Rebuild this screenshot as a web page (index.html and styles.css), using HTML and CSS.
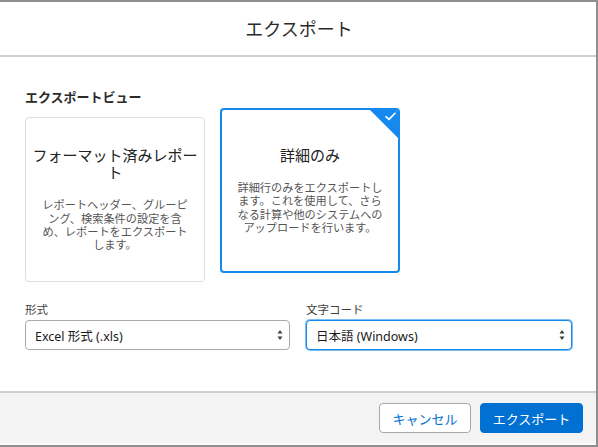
FILE: index.html
```html
<!DOCTYPE html>
<html lang="ja">
<head>
<meta charset="utf-8">
<title>エクスポート</title>
<link rel="stylesheet" href="styles.css">
</head>
<body>
<div class="modal">
  <header class="modal-header">
    <h1 class="modal-title">エクスポート</h1>
  </header>
  <main class="modal-body">
    <h2 class="section-label">エクスポートビュー</h2>
    <div class="cards">
      <div class="card">
        <div class="card-title card-title-wide">フォーマット済みレポート</div>
        <div class="card-desc">レポートヘッダー、グルーピング、検索条件の設定を含め、レポートをエクスポートします。</div>
      </div>
      <div class="card card-selected">
        <span class="check-corner">
          <svg class="check-icon" viewBox="0 0 12 10" width="11" height="9"><path d="M1 5.2 L4.3 8.2 L11 1.4" fill="none" stroke="#fff" stroke-width="1.8" stroke-linecap="round" stroke-linejoin="round"/></svg>
        </span>
        <div class="card-title">詳細のみ</div>
        <div class="card-desc">詳細行のみをエクスポートします。これを使用して、さらなる計算や他のシステムへのアップロードを行います。</div>
      </div>
    </div>
    <div class="fields">
      <div class="field">
        <label class="field-label">形式</label>
        <div class="select">
          <span class="select-value">Excel 形式 (.xls)</span>
          <svg class="select-arrows" viewBox="0 0 6 12" width="6" height="12"><path d="M3 1 L5.5 4.5 L0.5 4.5 Z M3 11 L5.5 7.5 L0.5 7.5 Z" fill="#3e3e3c"/></svg>
        </div>
      </div>
      <div class="field">
        <label class="field-label">文字コード</label>
        <div class="select select-focus">
          <span class="select-value">日本語 (Windows)</span>
          <svg class="select-arrows" viewBox="0 0 6 12" width="6" height="12"><path d="M3 1 L5.5 4.5 L0.5 4.5 Z M3 11 L5.5 7.5 L0.5 7.5 Z" fill="#3e3e3c"/></svg>
        </div>
      </div>
    </div>
  </main>
  <footer class="modal-footer">
    <button class="btn btn-neutral">キャンセル</button>
    <button class="btn btn-brand">エクスポート</button>
  </footer>
</div>
</body>
</html>
```
FILE: styles.css
```css
* { box-sizing: border-box; }
html, body { margin: 0; padding: 0; }
body {
  background: #8e8e8e;
  width: 598px;
  height: 447px;
  overflow: hidden;
  font-family: "Noto Sans", "Noto Sans CJK JP", sans-serif;
  color: #16325c;
}
.modal {
  margin-top: 2px;
  width: 596px;
  height: 443px;
  background: #fff;
  display: flex;
  flex-direction: column;
}
.modal-header {
  height: 55px;
  border-bottom: 2px solid #d0d0d0;
  display: flex;
  align-items: center;
  justify-content: center;
}
.modal-title {
  margin: 0;
  font-weight: 400;
  font-size: 18px;
  color: #2b2b2b;
  line-height: 24px;
  padding-left: 2px;
}
.modal-body {
  flex: 1;
  padding: 32px 24px 0 24px;
}
.section-label {
  margin: 0 0 3px 0;
  font-size: 13px;
  line-height: 16px;
  font-weight: 700;
  color: #2b2b2b;
  padding-left: 1px;
}
.cards {
  display: flex;
  align-items: flex-start;
  gap: 15px;
  padding-left: 1px;
}
.card {
  position: relative;
  width: 180px;
  height: 165px;
  border: 1px solid #d8dde6;
  border-radius: 4px;
  background: #fff;
  display: flex;
  flex-direction: column;
  align-items: center;
  justify-content: center;
  text-align: center;
  margin-top: 9px;
  padding: 0 12px;
}
.card-selected {
  margin-top: 0;
  border: 2px solid #1589ee;
  overflow: hidden;
}
.card-title {
  font-size: 15px;
  line-height: 17px;
  color: #222;
  margin: 0 -6px 17px;
}
.card-desc {
  font-size: 11.2px;
  line-height: 13.4px;
  color: #555;
  width: 152px;
}
.check-corner {
  position: absolute;
  top: 0;
  right: 0;
  width: 0;
  height: 0;
  border-top: 28px solid #1589ee;
  border-left: 28px solid transparent;
}
.check-icon {
  position: absolute;
  top: -26px;
  right: 2px;
}
.fields {
  margin-top: 21px;
  display: grid;
  grid-template-columns: 265px 266px;
  column-gap: 16px;
  padding-left: 1px;
}
.field-label {
  display: block;
  font-size: 11.5px;
  line-height: 14px;
  color: #3e3e3c;
  margin-bottom: 3px;
}
.select {
  height: 30px;
  border: 1px solid #a9a9a9;
  border-radius: 4px;
  display: flex;
  align-items: center;
  justify-content: space-between;
  padding: 0 6px 0 9px;
  background: #fff;
}
.select-focus {
  border: 1px solid #1589ee;
  box-shadow: 0 0 0 1px #7fbdf5;
}
.select-value {
  font-size: 12.5px;
  color: #1a1a1a;
}
.select-arrows { display: block; }
.modal-footer {
  height: 54px;
  border-top: 2px solid #cfcfcf;
  border-bottom: 2px solid #fafafa;
  background: #f3f3f3;
  display: flex;
  justify-content: flex-end;
  align-items: flex-start;
  gap: 9px;
  padding: 10px 13px 0 0;
}
.btn {
  height: 30px;
  border-radius: 4px;
  font-family: "Noto Sans", "Noto Sans CJK JP", sans-serif;
  font-size: 13px;
  padding: 0;
  cursor: pointer;
}
.btn-neutral {
  width: 92px;
  background: #fff;
  border: 1px solid #a8a8a8;
  color: #0070d2;
}
.btn-brand {
  width: 103px;
  background: #0070d2;
  border: 1px solid #0070d2;
  color: #fff;
}
```
